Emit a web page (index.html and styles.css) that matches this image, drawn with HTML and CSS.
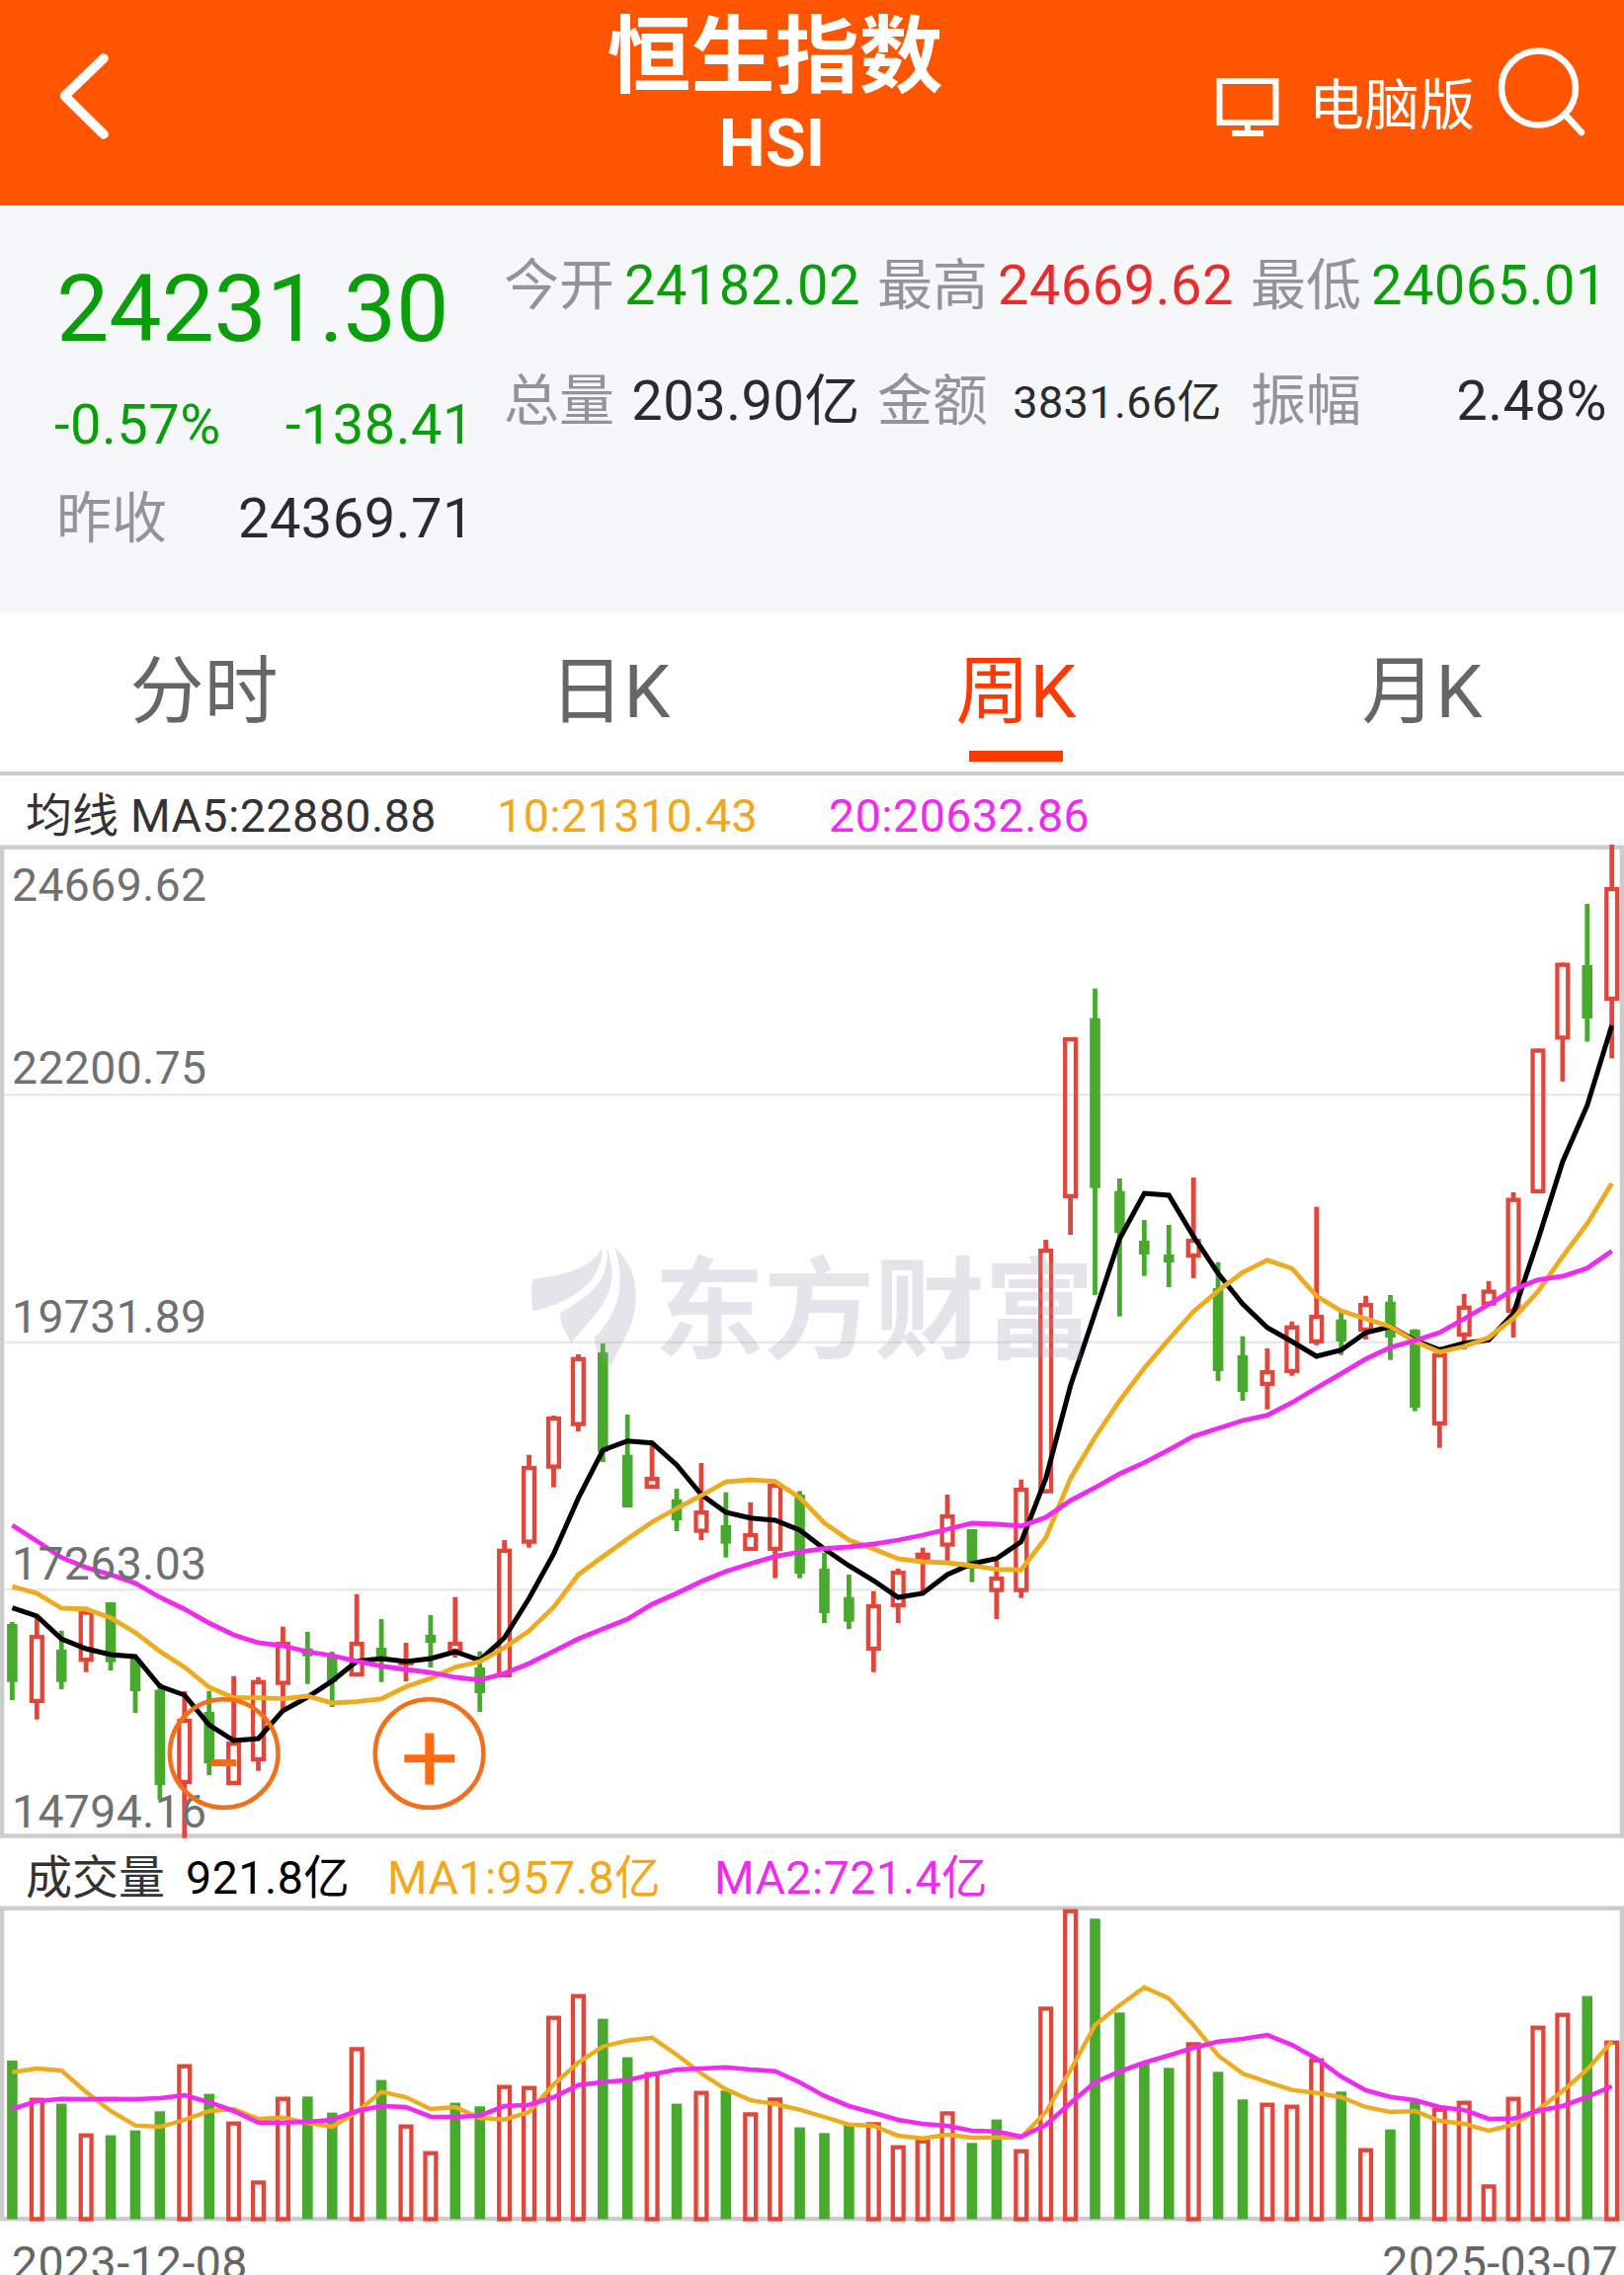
FILE: index.html
```html
<!DOCTYPE html>
<html lang="zh-CN">
<head>
<meta charset="utf-8">
<title>恒生指数 HSI</title>
<link rel="stylesheet" href="styles.css">
</head>
<body>
<header class="topbar">
  <svg class="back" viewBox="0 0 60 100" fill="none" stroke="#fff" stroke-width="9.5" stroke-linecap="round" stroke-linejoin="round"><path d="M50 11 L10.500 49 L50 88"/></svg>
  <div class="heading">
    <h1>恒生指数</h1>
    <div class="code">HSI</div>
  </div>
  <div class="tools">
    <svg class="pc" viewBox="0 0 64 62" fill="none" stroke="#fff" stroke-width="6"><rect x="3.500" y="4" width="57" height="42"/><path d="M32 46V55M16 57H48"/></svg>
    <span class="pc-text">电脑版</span>
    <svg class="search" viewBox="0 0 92 94" fill="none" stroke="#fff" stroke-width="6.500" stroke-linecap="round"><circle cx="42.500" cy="42" r="37.500"/><path d="M69 68.500L86 87"/></svg>
  </div>
</header>

<section class="quote">
  <div class="main-quote">
    <div class="price down">24231.30</div>
    <div class="change down"><span>-0.57%</span><span>-138.41</span></div>
    <div class="prev"><span class="label">昨收</span><span>24369.71</span></div>
  </div>
  <div class="stats">
    <div class="stat"><span class="label">今开</span><span class="down">24182.02</span></div>
    <div class="stat"><span class="label">最高</span><span class="up">24669.62</span></div>
    <div class="stat"><span class="label">最低</span><span class="down">24065.01</span></div>
    <div class="stat"><span class="label">总量</span><span>203.90亿</span></div>
    <div class="stat"><span class="label">金额</span><span class="small">3831.66亿</span></div>
    <div class="stat"><span class="label">振幅</span><span>2.48%</span></div>
  </div>
</section>

<nav class="tabs">
  <span class="tab">分时</span>
  <span class="tab">日K</span>
  <span class="tab active">周K</span>
  <span class="tab">月K</span>
</nav>

<div class="legend price-legend">
  <div><span class="cjk">均线</span><span>MA5:22880.88</span></div>
  <div class="orange">10:21310.43</div>
  <div class="pink">20:20632.86</div>
</div>
<svg class="chart" id="price" viewBox="0 853 1644 1010" width="1644" height="1010"></svg>

<div class="legend volume-legend">
  <div class="cjk">成交量</div>
  <div class="black">921.8亿</div>
  <div class="orange">MA1:957.8亿</div>
  <div class="pink">MA2:721.4亿</div>
</div>
<svg class="chart" id="volume" viewBox="0 1927 1644 323" width="1644" height="323"></svg>
<footer class="dates"><span>2023-12-08</span><span>2025-03-07</span></footer>
<script src="chart.js"></script>
</body>
</html>
```
FILE: styles.css
```css
* { box-sizing: border-box; }
html, body { margin: 0; height: 2303px; overflow: hidden; }
body {
  width: 1644px;
  background: #fefefe;
  font-family: Roboto, "Noto Sans CJK SC", sans-serif;
  color: #2b2b2d;
}
svg { display: block; }

.topbar {
  display: grid;
  grid-template-columns: 614px 341px 1fr;
  height: 208px;
  background: #ff5500;
  color: #fff;
}
.back { width: 60px; height: 100px; margin: 48px 0 0 55px; }
.heading { text-align: center; white-space: nowrap; }
.heading h1 { margin: 0; font-size: 85px; font-weight: 700; line-height: 117px; }
.code { font-size: 66.500px; font-weight: 700; line-height: 56px; margin-left: -6px; }
.tools { display: flex; align-items: flex-start; padding-left: 276px; }
.pc { width: 64px; height: 62px; margin-top: 78px; flex: none; }
.pc-text { font-size: 56px; line-height: 60px; margin: 77px 0 0 30px; white-space: nowrap; width: 168px; }
.search { width: 92px; height: 94px; margin: 47px 0 0 22px; flex: none; }

.quote {
  display: grid;
  grid-template-columns: 510px 1fr;
  height: 412px;
  background: #f6f7f9;
  font-size: 56px;
  letter-spacing: 0.500px;
  white-space: nowrap;
}
.down { color: #0a9f0a; }
.up { color: #e82c2c; }
.label { color: #949498; font-size: 56px; letter-spacing: 0; }
.main-quote { padding: 55px 30px 0 55px; }
.price { font-size: 95px; line-height: 100px; letter-spacing: -0.200px; padding-left: 2px; }
.change, .prev { display: flex; justify-content: space-between; line-height: 90px; }
.change { margin-top: 22px; }
.prev { margin-top: 5px; padding-left: 2px; }
.stats {
  display: grid;
  grid-template-columns: repeat(3, 361px);
  grid-auto-rows: 117px;
  column-gap: 17px;
  padding-top: 23px;
}
.stat { display: flex; justify-content: space-between; line-height: 117px; }
.small { font-size: 45px; letter-spacing: 0.400px; padding-right: 12px; line-height: 120px; }

.tabs {
  display: grid;
  grid-template-columns: repeat(4, 411px);
  height: 164.500px;
  padding-left: 1px;
  border-bottom: 4.500px solid #ccc;
  font-size: 75px;
  line-height: 160px;
  text-align: center;
  color: #666;
}
.tab.active { color: #ff3a00; }
.tab.active::after {
  content: "";
  display: block;
  width: 95px;
  height: 11px;
  margin: -20px auto 0;
  background: #ff3a00;
}

.legend {
  display: grid;
  padding: 13px 0 0 26px;
  font-size: 46.500px;
  letter-spacing: 0.500px;
  white-space: nowrap;
  color: #333;
}
.legend .cjk { font-size: 47px; letter-spacing: 0; margin-right: 12px; }
.price-legend { height: 68.500px; grid-template-columns: 477px 336px 1fr; line-height: 56px; }
.volume-legend { height: 64px; padding-top: 12px; grid-template-columns: 162px 204px 331px 1fr; line-height: 52px; }
.black { color: #000; }
.orange { color: #f2a81c; }
.pink { color: #f02af0; }

.axis { font-size: 46.300px; letter-spacing: 0.400px; fill: #707070; }
.watermark { fill: #a09eb4; opacity: 0.260; font: 700 112px "Noto Sans CJK SC", sans-serif; }
.dates {
  display: flex;
  justify-content: space-between;
  height: 53px;
  padding: 0 6px 0 12px;
  font-size: 46.500px;
  line-height: 82px;
  letter-spacing: 0.400px;
  color: #666;
}
```
FILE: chart.js
```js
// Weekly candles: [direction, high, body top, body bottom, low, volume top] in chart units.
const candles = [
['G',1642,1644,1702.7,1721,2085.3],['R',1637,1655,1724,1740.7,2123],['G',1650.7,1670,1702.7,1710,2129],
['R',1626.7,1630.5,1682.3,1692.7,2159],['G',1622,1622,1682.7,1691,2161],['G',1677,1679,1712,1734,2156],
['G',1704,1710.7,1807,1821.7,2136.7],['R',1712,1740,1806,1860.7,2089],['G',1711.7,1733,1785,1797,2119],
['R',1696.7,1763,1807,1807,2147],['R',1697.7,1700.7,1783,1792.7,2206.7],['R',1646.7,1662,1705.7,1730,2122],
['G',1652,1668.7,1676.7,1704.7,2121.7],['G',1672,1675,1702.7,1728,2138],['R',1614,1662,1697,1697,2071.7],
['G',1639,1668,1678,1702.7,2105],['R',1663,1681,1686,1702,2150],['G',1635,1655,1663,1688,2177],
['R',1616.7,1662,1673,1678,2128],['G',1671.7,1688,1714,1733,2131.7],['R',1559,1567.7,1698,1698,2110],
['R',1472.7,1484,1562.7,1566.7,2111],['R',1433,1434,1486.7,1505.7,2040],['R',1371,1373.7,1443.7,1449,2018],
['G',1360,1369,1470,1480,2043],['G',1432,1472.7,1526,1526,2082],['R',1463,1495,1507,1507,2097],
['G',1507,1517.7,1539,1550,2129],['R',1481,1529,1551.7,1559,2116],['G',1510.7,1544,1562.7,1576.7,2115.7],
['R',1520.7,1552,1570,1570,2137.7],['R',1501.7,1502,1570,1597.7,2122.7],['G',1509.3,1513,1593,1597.7,2153],
['G',1571.7,1588,1633,1643,2158.7],['G',1594,1616.7,1641.7,1649,2150],['R',1610.7,1624,1671,1692.7,2147.7],
['R',1588,1590,1627,1643,2171],['R',1566.7,1571.7,1581.7,1613,2165],['R',1513,1533,1565.7,1581.7,2136.7],
['G',1548,1548,1588,1601.7,2168.7],['R',1580,1596,1611.7,1639,2145],['R',1497.7,1506,1611.7,1617.7,2175],
['R',1255,1264,1511.7,1511.7,2030.7],['R',1050,1050,1213,1250,1932],['G',1000.7,1030.7,1202.7,1311,1941.7],
['G',1193,1205.7,1248,1332.7,2036.7],['G',1235,1256,1270,1291.7,2088],['G',1240,1270,1278,1303,2092.7],
['R',1192,1254,1273,1294,2066.7],['G',1277.7,1304,1388,1398,2096.7],['G',1352.7,1372,1409,1418,2124.7],
['R',1365,1387,1403,1426.7,2128],['R',1337.7,1341.7,1390,1392.7,2130],['R',1221.7,1331,1360,1361.7,2083],
['G',1328,1335.7,1358,1371.7,2116.7],['R',1311.7,1319,1348,1356,2174],['G',1311,1317.7,1354,1376.7,2155],
['G',1345.5,1346,1425,1428.5,2126.7],['R',1368,1370,1443,1465.7,2133],['R',1310,1321.7,1353,1366,2126],
['R',1296.8,1305.5,1321.7,1321.7,2210.7],['R',1207,1212.6,1329,1354,2122],['R',1061.5,1061.5,1208,1208,2050],
['R',974.6,974.6,1052.5,1094.8,2037],['G',915,977,1031,1054.4,2020],['R',855,898,1013,1071.4,2065]
];
// Weeks whose volume bar has the opposite direction to the candle.
const volumeFlipped = new Set([17, 18, 40]);

const ma5 = [1627.7,1636,1659,1669,1675,1677,1707,1716,1746,1762,1760,1731.7,1718,1701.7,1681.7,1679,1682,1679,1672,1680.7,1658,1618,1573,1516.7,1468,1458.7,1460.7,1483,1513,1531,1536.7,1539,1549,1568,1585,1600,1617,1613,1594,1583,1577.7,1560.7,1496.7,1403,1329,1254,1208,1210,1251.7,1289,1320,1344,1358,1373,1366.7,1349,1343,1357,1366.4,1359.7,1356.5,1329.6,1255.3,1176,1119,1038];
const ma10 = [1606,1613,1628,1629,1637.7,1652.7,1671.7,1687.7,1708,1718.7,1718.7,1719.7,1717,1724,1722.7,1719.7,1707.5,1699,1687.7,1682,1668,1651,1627,1594,1575.7,1558,1540.7,1527,1514,1500,1498,1499.7,1516,1541.7,1559,1568,1578,1581,1582,1585,1588.7,1589,1556.7,1496.7,1455,1418,1385,1355.7,1327.7,1306.7,1288,1275.7,1284,1312,1327,1335,1343,1358,1368.8,1363,1354,1334.4,1307.5,1272,1238.7,1198];
const ma20 = [1544,1560,1576.7,1586.7,1594,1602.7,1617,1629,1643,1655,1663,1666,1672,1676,1681.7,1686.7,1690,1693,1698,1700.7,1694,1684,1671.7,1659,1649,1639,1624,1613,1601,1590.7,1583,1575.7,1571,1567.7,1566,1563,1559,1554,1548,1542,1543,1544.7,1536,1519,1506,1492,1480.7,1467.7,1454,1446,1438,1432.7,1420,1405,1390.7,1375.7,1364,1357,1349,1335,1320.5,1305.5,1295.6,1292,1283.8,1266.4];
const vol1 = [2097.7,2094,2096,2117.7,2137,2151.7,2153,2146,2137,2135,2145,2143.7,2149,2153,2138,2117.7,2123,2135,2133,2144,2145.7,2138,2110,2088,2071.7,2065.7,2062.7,2080,2099,2115,2126,2130,2135.7,2143,2150.7,2152,2162,2164.7,2161,2164,2163.7,2163.7,2138,2096,2050,2030,2011.7,2023,2050,2080.7,2099,2107.7,2115.7,2118.7,2123,2133,2138,2137,2147,2150,2157,2150.7,2135.7,2116.7,2095,2066.7];
const vol2 = [2135,2127,2124.7,2125,2124.7,2125,2124,2121,2128,2137,2148.7,2148.7,2148,2146,2137,2132,2133,2142.7,2143,2141.7,2132,2130.7,2123,2110.7,2107.7,2105.7,2100,2095,2094,2092.7,2095,2096.7,2108,2121.7,2132,2138.7,2146,2150,2152,2157,2157.7,2163,2151,2129,2108,2097,2088,2080.7,2073,2066.7,2064,2060,2070,2084,2102,2116,2122.7,2126,2133,2136,2145,2144.7,2136.7,2132,2122.7,2112];

const RED = '#e2463b', GREEN = '#48aa2d', ORANGE = '#edab20', PINK = '#f02af0';
const xAt = i => 12.4 + i * 24.912;
const rect = (x, y, w, h, fill) => `<rect x="${x}" y="${y}" width="${w}" height="${h}" fill="${fill}"/>`;

// Red bodies are hollow with a thick outline.
function hollow(x, top, bottom) {
  if (bottom - top < 10.5) return rect(x - 7.6, top, 15.2, bottom - top, RED);
  return `<rect x="${x - 5.4}" y="${top + 2.1}" width="10.8" height="${bottom - top - 4.2}" fill="none" stroke="${RED}" stroke-width="4.3"/>`;
}
function line(values, color, width) {
  const pts = values.map((y, i) => `${xAt(i).toFixed(1)},${y}`).join(' ');
  return `<polyline points="${pts}" fill="none" stroke="${color}" stroke-width="${width}"/>`;
}
function frame(top, bottom) {
  return `<rect x="2.1" y="${top}" width="1639.8" height="${bottom - top}" fill="none" stroke="#ccc" stroke-width="4.4"/>`;
}

let out = frame(857.7, 1858.5);
[1108.3, 1358.9, 1609.3].forEach(y => { out += rect(4.3, y - 1.2, 1635.4, 2.4, '#e8e8e8'); });
candles.forEach(([dir, high, top, bottom, low], i) => {
  const x = xAt(i), color = dir === 'R' ? RED : GREEN;
  out += rect(x - 2.4, high, 4.8, Math.max(0, top - high + 1), color);
  out += rect(x - 2.4, bottom - 1, 4.8, Math.max(1, low - bottom + 1), color);
  out += dir === 'R' ? hollow(x, top, bottom) : rect(x - 5.3, top, 10.6, bottom - top, color);
});
out += line(ma5, '#000', 5) + line(ma10, ORANGE, 4.8) + line(ma20, PINK, 4.8);
[['24669.62', 911.5], ['22200.75', 1096.5], ['19731.89', 1348.5], ['17263.03', 1599], ['14794.16', 1850]]
  .forEach(([t, y]) => { out += `<text class="axis" x="12" y="${y}">${t}</text>`; });
out += `<g class="watermark"><g transform="translate(500 1230) scale(.408 .3333)">
<path d="M97 195C170 182 245 165 268 98C273 175 222 258 97 292C92 250 93 215 97 195Z"/>
<path d="M281 98C318 240 262 280 192 390C181 355 162 335 165 298C240 240 285 210 281 98Z"/>
<path d="M300 98C352 155 364 245 342 325C325 380 303 420 292 458C276 435 245 420 251 370C310 295 328 215 300 98Z"/></g>
<text x="662" y="1367" textLength="446">东方财富</text></g>`;
out += `<g fill="none" stroke="#f0701c" stroke-width="4.6"><circle cx="226.700" cy="1775" r="54.800"/><circle cx="434.600" cy="1775" r="54.800"/></g>`;
out += rect(214, 1781, 25, 7, '#ff6a10') + rect(409.3, 1776.2, 51, 8, '#ff6a10') + rect(430.3, 1754.500, 9, 52, '#ff6a10');
document.getElementById('price').innerHTML = out;

out = frame(1931.7, 2246.2);
candles.forEach((c, i) => {
  const x = xAt(i), green = (c[0] === 'G') !== volumeFlipped.has(i), top = c[5] + 0.6;
  out += green ? rect(x - 5.3, top, 10.6, 2246.4 - top, GREEN) : hollow(x, top, 2248.6);
});
out += line(vol1, ORANGE, 4.4) + line(vol2, PINK, 4.6);
document.getElementById('volume').innerHTML = out;
```
